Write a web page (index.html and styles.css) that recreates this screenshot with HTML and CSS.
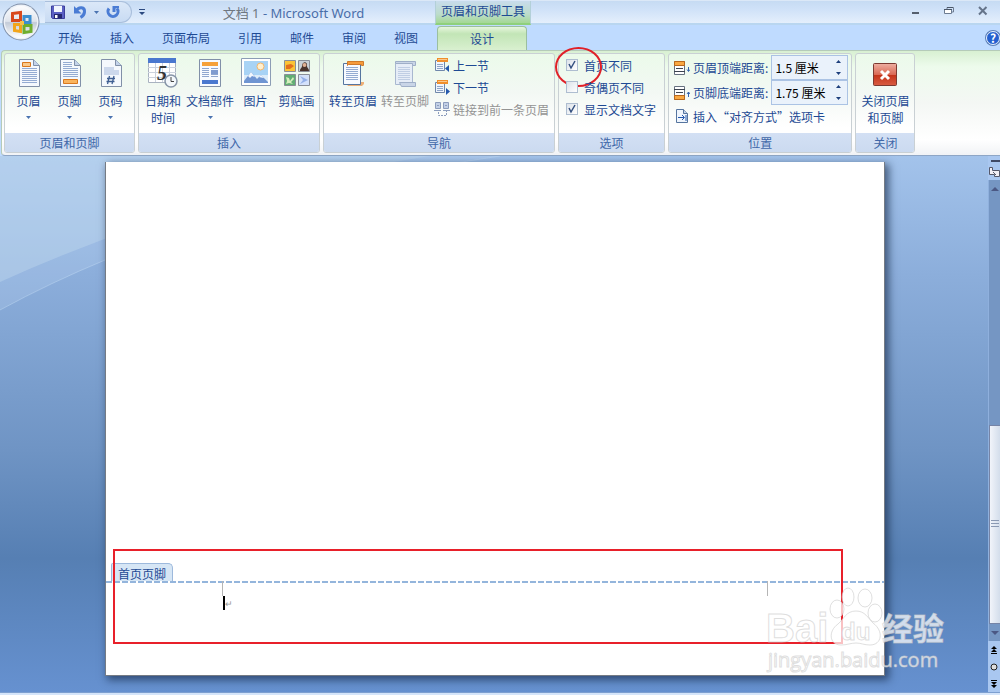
FILE: index.html
```html
<!DOCTYPE html>
<html lang="zh-CN">
<head>
  <meta charset="UTF-8">
  <meta name="viewport" content="width=device-width, initial-scale=1.0">

  <title>文档 1 - Microsoft Word</title>

  <link rel="stylesheet" href="styles.css">
</head>
<body>
  <header class="titlebar">
    <button class="orb" aria-label="Office">
      <svg width="42" height="42" viewBox="0 0 42 42">
        <defs>
          <linearGradient id="orb" x1="0" y1="0" x2="0" y2="1">
            <stop offset="0" stop-color="#fdfdfe"/>
            <stop offset=".48" stop-color="#dfe4ec"/>
            <stop offset=".52" stop-color="#c3cbd8"/>
            <stop offset="1" stop-color="#fff"/>
          </linearGradient>
        </defs>
        <circle cx="21" cy="21" r="18.5" fill="#7f8fa8"/>
        <circle cx="21" cy="21" r="17.5" fill="#eef2f8"/>
        <circle cx="21" cy="21" r="16" fill="url(#orb)"/>
        <g fill="none" stroke-width="3">
          <path d="M12.500 12.500l8-1v8h-8z" stroke="#d8481c"/>
          <path d="M24 15.500h6v6h-6z" stroke="#3b8ed0"/>
          <path d="M14.500 23.500h6v7l-6-1z" stroke="#f2a51b"/>
          <path d="M24 24.500h7v6l-7 1z" stroke="#6fae2e"/>
        </g>
        <path d="M20 20h4v4h-4z" fill="#f6c14a"/>
      </svg>
    </button>
    <div class="quick">
      <button aria-label="保存">
        <svg width="16" height="16" viewBox="0 0 16 16">
          <path d="M1.500 2h13v12.500h-12l-1-1z" fill="#5b60c4" stroke="#3c3f9c"/>
          <path d="M4 2h8v6H4z" fill="#f1f5fd"/>
          <path d="M4 10h8v4.500H4z" fill="#23276e"/>
          <path d="M5 11h2.500v3H5z" fill="#fff"/>
        </svg>
      </button>
      <button aria-label="撤消">
        <svg width="16" height="16" viewBox="0 0 16 16">
          <path d="M4 7c3-5 9-4 8.500 1-.2 2-1.500 4-4 5.500" fill="none" stroke="#4a7cd4" stroke-width="3"/>
          <path d="M2 2v7.500h7.500z" fill="#4a7cd4"/>
        </svg>
      </button>
      <svg class="arrow" width="5" height="3" viewBox="0 0 5 3"><path d="M0 0h5L2.500 3z"/></svg>
      <button aria-label="重复">
        <svg width="16" height="16" viewBox="0 0 16 16">
          <path d="M4 4.500a5 5 0 1 0 8 0" fill="none" stroke="#4a7cd4" stroke-width="3"/>
          <path d="M7.500 2H14v2l-3.500.5V8h-3z" fill="#4a7cd4"/>
        </svg>
      </button>
    </div>
    <button class="quick-more" aria-label="自定义快速访问工具栏">
      <svg width="6" height="6" viewBox="0 0 6 6"><path d="M0 0h6v1H0zM0 3h6L3 6z" fill="#2c4a80"/></svg>
    </button>
    <h1 class="title"><span class="title__doc">文档 1</span> - Microsoft Word</h1>
    <div class="context">页眉和页脚工具</div>
    <div class="window-buttons">
      <button aria-label="最小化"><svg width="10" height="10" viewBox="0 0 10 10"><path d="M2 6h7v2H2z" fill="#555f6e"/></svg></button>
      <button aria-label="还原"><svg width="10" height="10" viewBox="0 0 10 10"><path d="M3 3V1.500h6.500V6H8" fill="none" stroke="#6d7c92"/><path d="M.5 3.500h7v4h-7z" fill="#fff" stroke="#6d7c92"/><path d="M3 1h6v1H3zM0 3h8v1H0z" fill="#4b5768"/></svg></button>
      <button aria-label="关闭"><svg width="10" height="10" viewBox="0 0 10 10"><path d="M1 1l7.500 7.500M8.500 1L1 8.500" stroke="#65748a" stroke-width="2"/></svg></button>
    </div>
  </header>

  <nav class="tabs">
    <button class="tab">开始</button>
    <button class="tab">插入</button>
    <button class="tab">页面布局</button>
    <button class="tab">引用</button>
    <button class="tab">邮件</button>
    <button class="tab">审阅</button>
    <button class="tab">视图</button>
    <button class="tab tab--active">设计</button>
    <button class="help" aria-label="帮助">?</button>
  </nav>

  <section class="ribbon">
    <section class="group">
      <div class="group__body">
        <button class="tool">
          <svg class="tool__icon" width="32" height="32" viewBox="0 0 32 32">
            <path d="M6.500 2.500h14l6 6v21h-20z" fill="#f4f8fd" stroke="#8190a8"/>
            <path d="M20.500 2.500v6h6" fill="#c3d3ea" stroke="#8190a8"/>
            <path d="M9 11.500h15M9 13.500h15M9 15.500h15M9 17.500h15M9 19.500h15M9 21.500h15M9 23.500h15M9 25.500h15" stroke="#94abd2"/>
            <path d="M9.500 5.500h8v4h-8z" fill="#fbc98a" stroke="#d9781e"/>
          </svg>
          页眉
          <svg class="arrow" width="5" height="3" viewBox="0 0 5 3"><path d="M0 0h5L2.500 3z"/></svg>
        </button>
        <button class="tool">
          <svg class="tool__icon" width="32" height="32" viewBox="0 0 32 32">
            <path d="M6.500 2.500h14l6 6v21h-20z" fill="#f4f8fd" stroke="#8190a8"/>
            <path d="M20.500 2.500v6h6" fill="#c3d3ea" stroke="#8190a8"/>
            <path d="M9 5.500h9M9 7.500h9M9 9.500h9M9 11.500h15M9 13.500h15M9 15.500h15M9 17.500h15M9 19.500h15" stroke="#94abd2"/>
            <path d="M9.500 22.500h14v4h-14z" fill="#f9b45e" stroke="#d9781e"/>
          </svg>
          页脚
          <svg class="arrow" width="5" height="3" viewBox="0 0 5 3"><path d="M0 0h5L2.500 3z"/></svg>
        </button>
        <button class="tool">
          <svg class="tool__icon" width="32" height="32" viewBox="0 0 32 32">
            <path d="M6.500 2.500h14l6 6v21h-20z" fill="#f4f8fd" stroke="#8190a8"/>
            <path d="M20.500 2.500v6h6" fill="#c3d3ea" stroke="#8190a8"/>
            <path d="M9 10h10v3h5v5H9z" fill="#ccd8ec"/>
            <path d="M14.500 19l-2 8M19 19l-2 8M12 21.500h8M11.500 24.500h8" stroke="#3f5f93" stroke-width="1.300"/>
          </svg>
          页码
          <svg class="arrow" width="5" height="3" viewBox="0 0 5 3"><path d="M0 0h5L2.500 3z"/></svg>
        </button>
      </div>
      <h2 class="group__name">页眉和页脚</h2>
    </section>

    <section class="group">
      <div class="group__body group__body--insert">
        <button class="tool">
          <svg class="tool__icon" width="32" height="32" viewBox="0 0 32 32">
            <path d="M1.500 2.500h27v23h-27z" fill="#fff" stroke="#a9b2c0"/>
            <path d="M1 10.500h28M1 15.500h28M1 20.500h28M8.500 6v19M15.500 6v19M22.500 6v19" stroke="#ccd3de"/>
            <path d="M1 1h28v5H1z" fill="#4a78cf"/>
            <text class="day" x="10" y="23">5</text>
            <circle cx="24" cy="24" r="6" fill="#f4f8fc" stroke="#8795a8" stroke-width="1.500"/>
            <path d="M24 20v4.500h3" fill="none" stroke="#444"/>
          </svg>
          日期和<br>时间
        </button>
        <button class="tool">
          <svg class="tool__icon" width="32" height="32" viewBox="0 0 32 32">
            <path d="M5.500 2.500h21v27h-21z" fill="#f7faff" stroke="#8190a8"/>
            <path d="M8 5h16v4H8z" fill="#f6a13a"/>
            <path d="M8 11.500h7M8 13.500h7M8 15.500h7M8 17.500h7M8 19.500h7M17 11.500h7M17 17.500h7M17 19.500h7" stroke="#8fa6d0"/>
            <path d="M17 13h7v4h-7z" fill="#7f9bd0"/>
            <path d="M8 23h16v4H8z" fill="#4a78cf"/>
          </svg>
          文档部件
          <svg class="arrow" width="5" height="3" viewBox="0 0 5 3"><path d="M0 0h5L2.500 3z"/></svg>
        </button>
        <button class="tool">
          <svg class="tool__icon" width="32" height="32" viewBox="0 0 32 32">
            <path d="M1.500 1.500h29v27h-29z" fill="#fff" stroke="#8c9db5"/>
            <path d="M4 4h24v22H4z" fill="#a8d3f5"/>
            <path d="M4 18h24v8H4z" fill="#dcecf9"/>
            <circle cx="20.500" cy="9.500" r="3.500" fill="#fff0cf" stroke="#f3b66b"/>
            <path d="M4 24l7-9 6 7 4-4 7 7v1H4z" fill="#6f95d2"/>
            <path d="M8 19l3-4 4 5-3-1-2 2zM19 20l2-2 3 3-3-.5z" fill="#f2f7fd"/>
          </svg>
          图片
        </button>
        <button class="tool">
          <svg class="tool__icon" width="32" height="32" viewBox="0 0 32 32">
            <g stroke="#8a8f98">
              <path d="M3.500 3.500h11v11h-11z" fill="#fbc437"/>
              <path d="M17.500 3.500h11v11h-11z" fill="#c9cfd6"/>
              <path d="M3.500 17.500h11v11h-11z" fill="#62ae74"/>
              <path d="M17.500 17.500h11v11h-11z" fill="#d4e1fa"/>
            </g>
            <path d="M5 8l5-1 3 2-4 3H5z" fill="#e2701d"/>
            <path d="M19 14c0-3 2-3 2-5 0-5 6-5 5 0 0 2 2 2 2 5z" fill="#4a332c"/>
            <circle cx="23.500" cy="8" r="2" fill="#e0b094"/>
            <path d="M5 20l3 1 1 3 3-4 1 2-3 3 2 2-4-1-3 1 1-3z" fill="#d5efbd"/>
            <path d="M19 19l8 4-8 4 3-4z" fill="#94b0e8"/>
          </svg>
          剪贴画
        </button>
      </div>
      <h2 class="group__name">插入</h2>
    </section>

    <section class="group">
      <div class="group__body">
        <button class="tool tool--wide">
          <svg class="tool__icon" width="32" height="32" viewBox="0 0 32 32">
            <path d="M8 25h19v2l-2 2H11z" fill="#eeb078"/>
            <path d="M6.500 6.500h17v21h-17z" fill="#f7faff" stroke="#56759f"/>
            <path d="M9 10.500h12M9 12.500h12M9 14.500h12M9 16.500h12M9 18.500h12M9 20.500h12M9 22.500h12" stroke="#94abd2"/>
            <path d="M10.500 4.500h16v4h-2v-1h-13l-1 1z" fill="#f59b3c" stroke="#d07a2a"/>
          </svg>
          转至页眉
        </button>
        <button class="tool tool--wide" disabled>
          <svg class="tool__icon" width="32" height="32" viewBox="0 0 32 32">
            <path d="M6.500 6.500h17v21h-17z" fill="#e6edf7" stroke="#a9b8d0"/>
            <path d="M9 10.500h12M9 12.500h12M9 14.500h12M9 16.500h12M9 18.500h12M9 20.500h12M9 22.500h12" stroke="#c0cee4"/>
            <path d="M6.500 4.500h20v4h-3v-2h-17zM10.500 25.500h16v4h-14z" fill="#c9d5e7" stroke="#9fafc8"/>
          </svg>
          转至页脚
        </button>
        <div class="rows">
          <button class="row">
            <svg width="16" height="16" viewBox="0 0 16 16">
              <path d="M1.500 3.500h9v10h-9z" fill="#f0f5fc" stroke="#6f87ab"/>
              <path d="M3 7.500h6M3 9.500h6M3 11.500h6" stroke="#8fa5c8"/>
              <path d="M3 1h11v4H3z" fill="#f08f2c"/>
              <path d="M4 2h9v1H4z" fill="#fbc88c"/>
              <path d="M15 8v7l-4-3.500z" fill="#2458ad"/>
            </svg>
            上一节
          </button>
          <button class="row">
            <svg width="16" height="16" viewBox="0 0 16 16">
              <path d="M1.500 3.500h9v10h-9z" fill="#f0f5fc" stroke="#6f87ab"/>
              <path d="M3 7.500h6M3 9.500h6M3 11.500h6" stroke="#8fa5c8"/>
              <path d="M3 1h11v4H3z" fill="#f08f2c"/>
              <path d="M4 2h9v1H4z" fill="#fbc88c"/>
              <path d="M12 9v7l4-3.500z" fill="#2458ad"/>
            </svg>
            下一节
          </button>
          <button class="row" disabled>
            <svg width="16" height="16" viewBox="0 0 16 16">
              <path d="M1.500 1.500h5v6h-5zM9.500 1.500h5v6h-5z" fill="#c3d0e6" stroke="#8c9dbd"/>
              <path d="M0 9.500h7M9 9.500h7M3 4.500h2M11 4.500h2" stroke="#8c9dbd"/>
              <path d="M4.500 11v3.500h8V10" fill="none" stroke="#8c9dbd" stroke-dasharray="2 1"/>
            </svg>
            链接到前一条页眉
          </button>
        </div>
      </div>
      <h2 class="group__name">导航</h2>
    </section>

    <section class="group">
      <div class="group__body">
        <div class="rows rows--options">
          <label class="row row--marked"><input class="check" type="checkbox" checked>首页不同</label>
          <label class="row"><input class="check" type="checkbox">奇偶页不同</label>
          <label class="row"><input class="check" type="checkbox" checked>显示文档文字</label>
        </div>
      </div>
      <h2 class="group__name">选项</h2>
    </section>

    <section class="group">
      <div class="group__body">
        <div class="rows rows--position">
          <div class="field">
            <svg width="16" height="16" viewBox="0 0 16 16">
              <path d="M.5 1.500h10v13H.5z" fill="#fff" stroke="#66717f"/>
              <path d="M.5 1.500h10v4H.5z" fill="#f9a842" stroke="#b9681c"/>
              <path d="M2 8.500h7M0 11.500h11" stroke="#3c4450"/>
              <path d="M14.500 7v4M13 9.500l1.500 2 1.500-2" fill="none" stroke="#3564b0"/>
            </svg>
            <label for="top">页眉顶端距离:</label>
            <div class="spin">
              <input id="top" type="text" value="1.5 厘米">
              <button aria-label="增加"><svg width="5" height="3" viewBox="0 0 5 3"><path d="M0 3h5L2.500 0z"/></svg></button>
              <button aria-label="减少"><svg width="5" height="3" viewBox="0 0 5 3"><path d="M0 0h5L2.500 3z"/></svg></button>
            </div>
          </div>
          <div class="field">
            <svg width="16" height="16" viewBox="0 0 16 16">
              <path d="M.5 1.500h10v13H.5z" fill="#fff" stroke="#66717f"/>
              <path d="M.5 10.500h10v4H.5z" fill="#f9a842" stroke="#b9681c"/>
              <path d="M0 4.500h11M2 7.500h7" stroke="#3c4450"/>
              <path d="M14.500 12V7M13 9l1.500-2L16 9" fill="none" stroke="#3564b0"/>
            </svg>
            <label for="bottom">页脚底端距离:</label>
            <div class="spin">
              <input id="bottom" type="text" value="1.75 厘米">
              <button aria-label="增加"><svg width="5" height="3" viewBox="0 0 5 3"><path d="M0 3h5L2.500 0z"/></svg></button>
              <button aria-label="减少"><svg width="5" height="3" viewBox="0 0 5 3"><path d="M0 0h5L2.500 3z"/></svg></button>
            </div>
          </div>
          <button class="row">
            <svg width="16" height="16" viewBox="0 0 16 16">
              <path d="M2.500 1.500h7l4 4v9h-11z" fill="#eff5fd" stroke="#56759f"/>
              <path d="M9.500 1.500v4h4" fill="#c3d3ea" stroke="#56759f"/>
              <path d="M4 9.500h6M8 7l2.500 2.500L8 12M12 7v6" fill="none" stroke="#2458ad"/>
            </svg>
            插入“对齐方式”选项卡
          </button>
        </div>
      </div>
      <h2 class="group__name">位置</h2>
    </section>

    <section class="group">
      <div class="group__body">
        <button class="tool tool--wide">
          <svg class="tool__icon" width="32" height="32" viewBox="0 0 32 32">
            <defs>
              <linearGradient id="close" x1="0" y1="0" x2="0" y2="1">
                <stop offset="0" stop-color="#eeb0a2"/>
                <stop offset=".5" stop-color="#da6a55"/>
                <stop offset=".52" stop-color="#c33319"/>
                <stop offset="1" stop-color="#d95c42"/>
              </linearGradient>
            </defs>
            <rect x="4.500" y="6.500" width="23" height="22" rx="1" fill="url(#close)" stroke="#7c3a31"/>
            <path d="M12 14l8 8M20 14l-8 8" stroke="#fff" stroke-width="3"/>
          </svg>
          关闭页眉<br>和页脚
        </button>
      </div>
      <h2 class="group__name">关闭</h2>
    </section>
  </section>

  <div class="workspace">
    <svg class="swoosh" width="560" height="160" viewBox="0 0 560 160">
      <path d="M0 0h500Q200 45 0 154z" fill="#c4dcf5" fill-opacity=".22"/>
      <path d="M0 0h430Q200 35 0 126z" fill="#c6dcf0" fill-opacity=".38"/>
      <path d="M500 0Q200 45 0 154" fill="none" stroke="#c4dcf5" stroke-opacity=".45"/>
    </svg>
    <main class="canvas">
      <article class="page">
        <div class="page__tag">首页页脚</div>
        <footer class="page__footer">
          <div class="corners"><span class="corner"></span><span class="corner corner--right"></span></div>
          <p class="line"><span class="caret"></span>↵</p>
        </footer>
        <div class="page__frame"></div>
      </article>
      <svg class="watermark" width="186" height="92" viewBox="0 0 186 92">
        <g class="watermark__ink">
          <text class="wm-latin" x="2" y="56">Bai</text>
          <path d="M92 25c9 0 12 7 17 12 11 8 9 22-3 22-6 0-9-2-14-2s-9 2-15 2c-12 0-13-14-3-21 6-5 8-13 18-13z"/>
          <ellipse cx="73" cy="23" rx="7" ry="9"/>
          <ellipse cx="84" cy="11" rx="6" ry="9"/>
          <ellipse cx="101" cy="12" rx="7" ry="9"/>
          <ellipse cx="111" cy="27" rx="7" ry="9"/>
          <text class="wm-small" x="77" y="54">du</text>
          <text class="wm-cjk" x="118" y="54">经验</text>
          <text class="wm-url" x="4" y="81">jingyan.baidu.com</text>
        </g>
      </svg>
    </main>
    <aside class="scroll">
      <span class="scroll__split"></span>
      <button aria-label="标尺"><svg width="12" height="12" viewBox="0 0 12 12"><path d="M1.500 1.500h3v3h7v6h-5v-2h-5z" fill="#f0eef4" stroke="#55586a"/><path d="M5 6l3 3" stroke="#55586a"/></svg></button>
      <div class="scroll__track">
        <button class="scroll__arrow" aria-label="向上"><svg width="8" height="4" viewBox="0 0 8 4"><path d="M0 4h8L4 0z" fill="#4b5884"/></svg></button>
        <div class="scroll__space"></div>
        <div class="scroll__thumb"></div>
        <button class="scroll__arrow" aria-label="向下"><svg width="8" height="4" viewBox="0 0 8 4"><path d="M0 0h8L4 4z" fill="#4b5884"/></svg></button>
      </div>
      <button class="scroll__nav" aria-label="前一页"><svg width="8" height="8" viewBox="0 0 8 8"><path d="M4 0l3 3H1zM4 3l3 3H1zM1 7h6v1H1z"/></svg></button>
      <button class="scroll__nav" aria-label="选择浏览对象"><svg width="8" height="8" viewBox="0 0 8 8"><circle cx="4" cy="4" r="3" fill="#ddd" stroke="#222"/></svg></button>
      <button class="scroll__nav" aria-label="下一页"><svg width="8" height="8" viewBox="0 0 8 8"><path d="M1 0h6v1H1zM1 2h6L4 5zM1 5h6L4 8z"/></svg></button>
    </aside>
  </div>
  <div class="status"></div>
</body>
</html>
```

FILE: styles.css
```css
* {
  box-sizing: border-box;
}

body, html {
  margin: 0;
  height: 100%;
}

body {
  display: flex;
  flex-direction: column;
  overflow: hidden;
  background: #bfdbff;
  color: #1e4a94;
  font-family: "Noto Sans CJK SC", "Noto Sans", sans-serif;
  font-size: 12px;
  line-height: 17px;
}

button {
  display: flex;
  align-items: center;
  justify-content: center;
  margin: 0;
  padding: 0;
  border: 0;
  background: none;
  color: inherit;
  font: inherit;
}

button:disabled {
  color: #949494;
}

h1, h2, p {
  margin: 0;
  font-size: 12px;
  font-weight: normal;
}

svg {
  flex: none;
}

.arrow {
  fill: #4a73b0;
}

/* title bar */

.titlebar {
  position: relative;
  display: flex;
  flex: none;
  height: 25px;
  padding-left: 45px;
  border-top: 1px solid #dbe8f7;
  border-bottom: 2px solid #b9d6f0;
  background: linear-gradient(#c6dbf3, #d0e2f8 40%, #e4effc);
}

.orb {
  position: absolute;
  left: 0;
  top: 0;
  z-index: 2;
}

.quick {
  display: flex;
  align-items: center;
  gap: 6px;
  height: 22px;
  padding: 0 10px 0 5px;
  border: 1px solid #a9bfdc;
  border-left: 0;
  border-radius: 0 11px 11px 0;
  background: linear-gradient(#dbe8f8, #c8dbf3);
}

.quick-more {
  width: 20px;
}

.title {
  flex: 0 1 283px;
  color: #4a6ea9;
  font-family: "Noto Sans", "Noto Sans CJK SC", sans-serif;
  font-size: 13px;
  line-height: 24px;
  text-align: center;
}

.title__doc {
  color: #6f7780;
}

.context {
  height: 24px;
  padding: 0 5px;
  border: 1px solid #b3d0d8;
  border-width: 0 1px;
  border-bottom: 2px solid #8fd07c;
  background: linear-gradient(#c8dcec, #bcdccb 60%, #a4d894);
  line-height: 20px;
}

.window-buttons {
  display: flex;
  margin-left: auto;
  padding-bottom: 2px;
}

.window-buttons button {
  width: 34px;
}

/* tabs */

.tabs {
  display: flex;
  flex: none;
  height: 25px;
  padding: 1px 0 0 44px;
}

.tab {
  padding: 0 14px 1px;
}

.tab--active {
  margin-left: 5px;
  padding: 0 32px;
  border: 1px solid #9bbf9f;
  border-bottom: 0;
  border-radius: 4px 4px 0 0;
  background: linear-gradient(#e6f6dc, #c2e5b6 30%, #d9f0d0);
}

.help {
  align-self: center;
  width: 14px;
  height: 14px;
  margin-left: auto;
  border: 1px solid #e8f1ff;
  border-radius: 50%;
  background: #2560cf;
  box-shadow: 0 0 0 1px #5b7fb8;
  color: #fff;
  font-weight: bold;
  line-height: 12px;
}

/* ribbon */

.ribbon {
  display: flex;
  flex: none;
  gap: 3px;
  margin-left: 1px;
  padding: 2px;
  border: 1px solid #b5cbb9;
  border-right: 0;
  border-bottom-color: #8ea6c6;
  border-radius: 4px 0 0 4px;
  background: linear-gradient(#d8f0d2, #edfbec 15%, #f4f7f4 50%, #fff 85%, #f1f3f6);
}

.group {
  display: flex;
  flex-direction: column;
  border: 1px solid #c9d0d4;
  border-radius: 3px;
  background: linear-gradient(#ebfaea, #f3f8f4 40%, #fff 75%);
}

.group__body {
  display: flex;
  height: 79px;
  padding: 0 3px;
}

.group__body--insert {
  padding: 0 2px;
}

.group__name {
  border-radius: 0 0 2px 2px;
  background: linear-gradient(#d3e0f4, #cbdaf0);
  color: #4067a8;
  line-height: 19px;
  text-align: center;
}

.tool {
  flex-direction: column;
  justify-content: flex-start;
  min-width: 41px;
  padding: 3px 1px 0;
}

.tool--wide {
  padding: 3px 2px 0;
}

.group__body--insert .tool:first-child {
  min-width: 44px;
}

.tool__icon {
  margin-bottom: 3px;
}

.tool .arrow {
  margin-top: 7px;
}

.day {
  fill: #333;
  font: italic bold 20px "Liberation Serif", serif;
}

.rows {
  padding: 0 2px 0 3px;
}

.row {
  position: relative;
  display: flex;
  align-items: center;
  gap: 3px;
  height: 22px;
}

.rows--options {
  padding: 0 5px 0 4px;
}

.rows--options .row {
  gap: 6px;
}

.check {
  appearance: none;
  width: 12px;
  height: 12px;
  margin: 0;
  border: 1px solid #aebdd0;
  background: linear-gradient(135deg, #dde3ea, #fff);
}

.check:checked {
  background: url("data:image/svg+xml,%3Csvg xmlns='http://www.w3.org/2000/svg' viewBox='0 0 10 10'%3E%3Cpath d='M2 4l2 4 4-7' fill='none' stroke='%23345080' stroke-width='1.500'/%3E%3C/svg%3E"), linear-gradient(135deg, #dde3ea, #fff);
}

.row--marked::after {
  content: "";
  position: absolute;
  left: -11px;
  top: -7px;
  width: 43px;
  height: 36px;
  border: 2px solid #e02028;
  border-radius: 50%;
}

.rows--position {
  padding: 1px 0 0 2px;
}

.field {
  display: flex;
  align-items: center;
  gap: 3px;
  height: 25px;
}

.spin {
  display: grid;
  grid-template: 1fr 1fr / 1fr 17px;
  width: 77px;
  height: 25px;
  border: 1px solid #abc3e4;
  background: #eaf2fb;
}

.spin input {
  grid-row: 1 / 3;
  width: 100%;
  min-width: 0;
  padding: 0 3px;
  border: 0;
  background: none;
  color: #000;
  font: inherit;
}

.spin svg {
  fill: #1d3f7c;
}

/* document */

.workspace {
  position: relative;
  display: flex;
  flex: 1;
  min-height: 0;
  background: linear-gradient(#a3c3eb, #8caedb 22%, #6f94c4 55%, #567fb3 75%, #6691d0);
}

.swoosh {
  position: absolute;
  left: 0;
  top: 0;
}

.canvas {
  position: relative;
  display: flex;
  flex: 1;
  padding: 6px 103px 16px 105px;
}

.page {
  position: relative;
  display: flex;
  flex: 1;
  flex-direction: column;
  align-items: flex-start;
  justify-content: flex-end;
  border: 1px solid #757b84;
  border-top: 0;
  background: #fff;
  box-shadow: 3px 3px 8px 1px rgba(20, 40, 70, .65);
}

.page__tag {
  height: 18px;
  margin-left: 5px;
  padding: 0 6px;
  border: 1px solid #9db9dc;
  border-bottom: 0;
  border-radius: 2px 5px 0 0;
  background: #d6e6f5;
  line-height: 19px;
}

.page__footer {
  width: 100%;
  height: 94px;
  padding: 0 93px;
  background: repeating-linear-gradient(90deg, #94b5dc 0 6px, transparent 6px 8px) top / 100% 2px no-repeat;
}

.corners {
  display: flex;
  justify-content: space-between;
}

.corner {
  width: 24px;
  height: 15px;
  border-right: 1px solid #b5b5b5;
}

.corner--right {
  border-right: 0;
  border-left: 1px solid #b5b5b5;
}

.line {
  display: flex;
  align-items: center;
  height: 14px;
  padding-left: 24px;
  color: #999;
  font-size: 9px;
}

.caret {
  width: 2px;
  height: 14px;
  background: #000;
}

.page__frame {
  position: absolute;
  left: 7px;
  right: 41px;
  bottom: 31px;
  height: 95px;
  border: 2px solid #e8202a;
}

.watermark {
  position: absolute;
  right: 38px;
  bottom: 14px;
}

.watermark__ink {
  fill: #fff;
  fill-opacity: .72;
  stroke: #c9c9c9;
  stroke-opacity: .6;
}

.wm-latin {
  font: bold 40px "Liberation Sans", sans-serif;
}

.wm-small {
  font: bold 24px "Liberation Sans", sans-serif;
}

.wm-cjk {
  font: bold 31px "Noto Sans CJK SC", sans-serif;
}

.wm-url {
  font: 20px "Open Sans", sans-serif;
}

/* scroll bar */

.scroll {
  z-index: 1;
  display: flex;
  flex-direction: column;
  width: 12px;
  padding-top: 4px;
  background: #a9c7f0;
}

.scroll__split {
  height: 2px;
  margin: 0 0 4px 3px;
  background: #3f4a66;
}

.scroll__track {
  display: flex;
  flex: 1;
  flex-direction: column;
  margin-top: 2px;
  border-left: 1px solid #8fb0dd;
  background: #7596c3;
}

.scroll__arrow {
  height: 17px;
}

.scroll__space {
  flex: 229;
}

.scroll__thumb {
  flex: 198;
  border: 1px solid #7684a6;
  border-right: 0;
  background:
    repeating-linear-gradient(#8a99b3 0 1px, transparent 1px 3px) center / 8px 8px no-repeat,
    linear-gradient(90deg, #f1f4fa, #d3ddeb);
}

.scroll__nav {
  height: 17px;
}

.status {
  flex: none;
  height: 3px;
  border-top: 1px solid #7d9fd0;
  background: #d5e5fa;
}
```
